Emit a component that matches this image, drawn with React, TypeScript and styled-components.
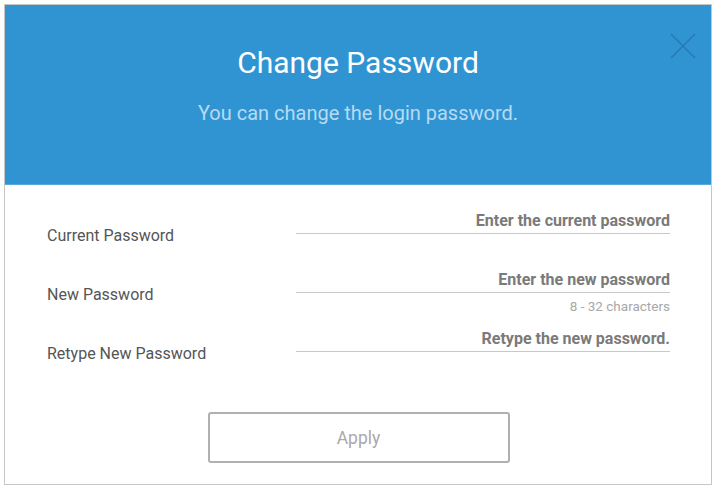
import React from "react";
import styled, { createGlobalStyle } from "styled-components";

const Global = createGlobalStyle`
  html, body { margin: 0; padding: 0; background: #ffffff; }
  body { font-family: Roboto, "Liberation Sans", Arial, sans-serif; }
  * { box-sizing: border-box; }
`;

const Page = styled.div`
  padding: 4px 5px 7px 4px;
`;

const Dialog = styled.div`
  width: 708px;
  height: 481px;
  border: 1px solid #c6c6c6;
  background: #ffffff;
  display: flex;
  flex-direction: column;
`;

const Header = styled.header`
  position: relative;
  height: 180px;
  background: #3194d2;
  border-bottom: 1px solid #5aa9dc;
  display: flex;
  flex-direction: column;
  align-items: center;
  padding-top: 40px;
`;

const Title = styled.h1`
  margin: 0;
  font-size: 30px;
  line-height: 36px;
  font-weight: 400;
  color: #ffffff;
`;

const Subtitle = styled.p`
  margin: 20px 0 0;
  font-size: 20px;
  line-height: 24px;
  color: #b5dbf4;
`;

const Close = styled.button`
  position: absolute;
  top: 28px;
  right: 15px;
  width: 26px;
  height: 26px;
  padding: 0;
  border: none;
  background: transparent;
  cursor: pointer;
  svg { display: block; }
`;

const Body = styled.div`
  flex: 1;
  display: flex;
  flex-direction: column;
  padding: 25px 40px 0 42px;
`;

const Form = styled.div`
  display: grid;
  grid-auto-rows: 59px;
`;

const Row = styled.div`
  display: grid;
  grid-template-columns: 249px 374px;
  align-items: start;
`;

const Label = styled.label`
  padding-top: 16px;
  font-size: 16px;
  line-height: 20px;
  color: #555555;
`;

const Field = styled.div`
  display: flex;
  flex-direction: column;
  align-items: stretch;
`;

const Input = styled.input`
  width: 100%;
  height: 24px;
  padding: 0 0 3px;
  border: none;
  border-bottom: 1px solid #c9c9c9;
  outline: none;
  background: transparent;
  text-align: right;
  font-family: inherit;
  font-size: 16px;
  line-height: 20px;
  font-weight: 700;
  color: #444;
  &::placeholder { color: #7a7a7a; opacity: 1; }
`;

const Hint = styled.span`
  margin-top: 6px;
  text-align: right;
  font-size: 13.5px;
  line-height: 14px;
  color: #a8a8a8;
`;

const Actions = styled.div`
  display: flex;
  justify-content: center;
  padding-top: 25px;
  padding-right: 1px;
`;

const Apply = styled.button`
  width: 302px;
  height: 51px;
  border: 2px solid #b0b0b0;
  border-radius: 3px;
  background: #ffffff;
  font-family: inherit;
  font-size: 17.5px;
  color: #a9a9a9;
  cursor: default;
`;

const fields = [
  { label: "Current Password", placeholder: "Enter the current password" },
  { label: "New Password", placeholder: "Enter the new password", hint: "8 - 32 characters" },
  { label: "Retype New Password", placeholder: "Retype the new password." },
];

export default function App() {
  return (
    <Page>
      <Global />
      <Dialog>
        <Header>
          <Title>Change Password</Title>
          <Subtitle>You can change the login password.</Subtitle>
          <Close aria-label="Close">
            <svg width="26" height="26" viewBox="0 0 26 26">
              <path d="M1 1 L25 25 M25 1 L1 25" stroke="#2678b4" strokeWidth="1.4" fill="none" />
            </svg>
          </Close>
        </Header>
        <Body>
          <Form>
            {fields.map((f) => (
              <Row key={f.label}>
                <Label>{f.label}</Label>
                <Field>
                  <Input type="password" placeholder={f.placeholder} />
                  {f.hint && <Hint>{f.hint}</Hint>}
                </Field>
              </Row>
            ))}
          </Form>
          <Actions>
            <Apply disabled>Apply</Apply>
          </Actions>
        </Body>
      </Dialog>
    </Page>
  );
}
